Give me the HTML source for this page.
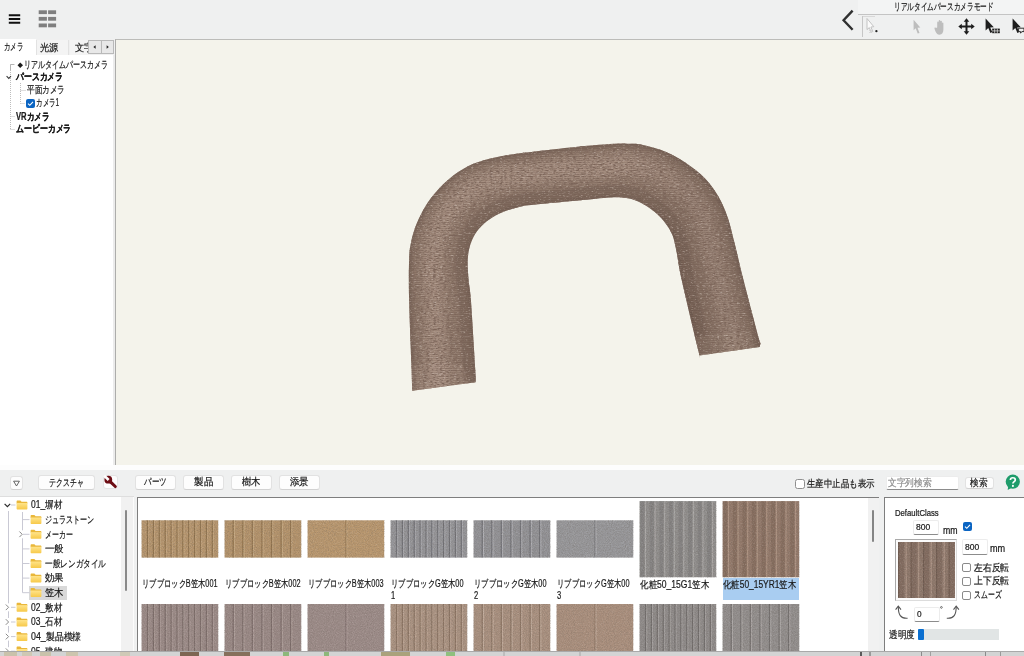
<!DOCTYPE html>
<html lang="ja"><head><meta charset="utf-8"><title>RIKCAD</title>
<style>
html,body{margin:0;padding:0}
body{width:1024px;height:656px;overflow:hidden;background:#eff0f0;font-family:"Liberation Sans",sans-serif;font-size:10px;color:#1b1b1b;position:relative}
div,span,svg{position:absolute;box-sizing:border-box}
.t{white-space:nowrap;transform-origin:0 50%;line-height:12px;height:12px;font-size:10px;-webkit-text-stroke:0.22px currentColor}
.b{font-weight:bold}
.btn{background:#fdfdfd;border:1px solid #e2e2e2;border-bottom-color:#d2d2d2;border-radius:3px}
.inp{background:#fff;border:1px solid #ececec;border-bottom:1px solid #8c8c8c;border-radius:2px}
.cb{width:9px;height:9px;border:1px solid #7a7a7a;border-radius:2px;background:#fff}
.cbx{width:9px;height:9px;border-radius:2px;background:#0a64c2}
</style></head><body>
<!-- window frames -->
<div style="left:0px;top:39px;width:113px;height:426px;background:#fff"></div>
<div style="left:113px;top:39px;width:2px;height:426px;background:#ececec"></div>
<div style="left:0px;top:465px;width:1024px;height:5px;background:#fdfdfd"></div>
<!-- 3D viewport -->
<div style="left:115px;top:39px;width:909px;height:426px;background:#f4f3eb;border-left:1px solid #adadab;border-top:1px solid #bcbcb9"></div>
<svg style="left:0;top:0" width="1024" height="656" viewBox="0 0 1024 656">
<defs>
<clipPath id="oc"><path d="M412.2 390.7C412.1 386.2 411.9 379.1 411.4 364.0C410.9 348.9 409.5 317.3 409.1 300.0C408.7 282.7 408.8 269.6 409.1 260.0C409.4 250.4 409.8 248.4 411.0 242.4C412.2 236.4 414.1 230.2 416.5 224.1C418.9 218.0 422.2 211.4 425.6 205.9C429.0 200.4 432.0 196.2 436.6 191.2C441.2 186.2 446.9 180.3 453.0 175.7C459.1 171.1 466.2 166.9 473.2 163.8C480.2 160.8 487.3 159.2 495.1 157.4C502.9 155.6 514.0 154.1 520.0 153.2C526.0 152.3 522.9 152.8 531.3 151.9C539.7 151.0 556.5 148.9 570.3 147.5C584.1 146.1 604.1 144.4 614.0 143.8C623.9 143.1 624.9 143.6 629.7 143.8C634.5 143.9 636.9 143.6 642.9 144.9C648.9 146.2 658.5 148.6 665.7 151.7C672.9 154.8 679.8 158.8 686.3 163.2C692.8 167.6 699.3 172.5 704.6 178.0C709.9 183.5 714.5 189.8 718.3 196.3C722.1 202.8 724.8 209.3 727.5 216.9C730.2 224.5 731.6 231.5 734.3 242.0C737.0 252.5 739.4 263.9 743.5 280.0C747.6 296.1 756.1 328.4 758.9 338.8C761.7 349.2 760.4 340.7 760.5 342.1C760.6 343.5 759.8 346.3 759.7 347.1L699.4 355.5C699.2 354.8 701.5 363.9 698.5 351.3C695.5 338.7 685.5 297.1 681.7 280.0C678.0 262.9 677.7 256.8 676.0 248.9C674.3 241.1 674.0 238.1 671.5 232.9C669.0 227.8 665.2 222.4 661.2 218.0C657.2 213.6 652.0 209.7 647.4 206.6C642.8 203.5 638.0 201.2 633.7 199.7C629.5 198.2 626.0 197.9 621.9 197.5C617.8 197.1 616.7 197.0 609.4 197.5C602.1 198.0 591.1 199.3 578.1 200.6C565.1 201.8 540.9 204.0 531.2 205.0C521.6 206.0 524.8 205.6 520.0 206.8C515.2 208.0 507.8 210.0 502.4 212.3C497.0 214.6 492.1 217.3 487.8 220.5C483.5 223.7 479.7 227.5 476.8 231.5C473.9 235.5 471.9 239.6 470.4 244.3C468.9 249.1 468.0 254.1 467.7 260.0C467.4 265.9 468.1 273.3 468.6 280.0C469.1 286.7 469.8 285.0 470.9 300.0C472.0 315.0 474.5 356.3 475.3 370.0C476.1 383.7 475.5 380.2 475.5 382.3Z"/></clipPath>
<filter id="bl4" x="-20%" y="-20%" width="140%" height="140%"><feGaussianBlur stdDeviation="4"/></filter>
<filter id="bl1" x="-20%" y="-20%" width="140%" height="140%"><feGaussianBlur stdDeviation="1.1"/></filter>
<filter id="bl2" x="-20%" y="-20%" width="140%" height="140%"><feGaussianBlur stdDeviation="2"/></filter>
<filter id="grain" x="0" y="0" width="100%" height="100%"><feTurbulence type="fractalNoise" baseFrequency="0.3 0.85" numOctaves="2" seed="3"/><feColorMatrix type="matrix" values="0 0 0 0 0.2  0 0 0 0 0.13  0 0 0 0 0.1  2.2 2.2 0 0 -2.0"/></filter>
<filter id="grainl" x="0" y="0" width="100%" height="100%"><feTurbulence type="fractalNoise" baseFrequency="0.35 0.9" numOctaves="2" seed="11"/><feColorMatrix type="matrix" values="0 0 0 0 0.70  0 0 0 0 0.61  0 0 0 0 0.55  1.0 1.0 0 0 -1.08"/></filter>
<pattern id="rows" width="4" height="2" patternUnits="userSpaceOnUse"><rect width="4" height="1" fill="#4a382f" opacity="0.13"/></pattern>
<linearGradient id="lr" x1="0" y1="0" x2="1" y2="0"><stop offset="0" stop-color="#3c2c25" stop-opacity="0"/><stop offset="0.62" stop-color="#3c2c25" stop-opacity="0"/><stop offset="0.8" stop-color="#3c2c25" stop-opacity="0.13"/><stop offset="1" stop-color="#3c2c25" stop-opacity="0.1"/></linearGradient>
</defs>
<path d="M412.2 390.7C412.1 386.2 411.9 379.1 411.4 364.0C410.9 348.9 409.5 317.3 409.1 300.0C408.7 282.7 408.8 269.6 409.1 260.0C409.4 250.4 409.8 248.4 411.0 242.4C412.2 236.4 414.1 230.2 416.5 224.1C418.9 218.0 422.2 211.4 425.6 205.9C429.0 200.4 432.0 196.2 436.6 191.2C441.2 186.2 446.9 180.3 453.0 175.7C459.1 171.1 466.2 166.9 473.2 163.8C480.2 160.8 487.3 159.2 495.1 157.4C502.9 155.6 514.0 154.1 520.0 153.2C526.0 152.3 522.9 152.8 531.3 151.9C539.7 151.0 556.5 148.9 570.3 147.5C584.1 146.1 604.1 144.4 614.0 143.8C623.9 143.1 624.9 143.6 629.7 143.8C634.5 143.9 636.9 143.6 642.9 144.9C648.9 146.2 658.5 148.6 665.7 151.7C672.9 154.8 679.8 158.8 686.3 163.2C692.8 167.6 699.3 172.5 704.6 178.0C709.9 183.5 714.5 189.8 718.3 196.3C722.1 202.8 724.8 209.3 727.5 216.9C730.2 224.5 731.6 231.5 734.3 242.0C737.0 252.5 739.4 263.9 743.5 280.0C747.6 296.1 756.1 328.4 758.9 338.8C761.7 349.2 760.4 340.7 760.5 342.1C760.6 343.5 759.8 346.3 759.7 347.1L699.4 355.5C699.2 354.8 701.5 363.9 698.5 351.3C695.5 338.7 685.5 297.1 681.7 280.0C678.0 262.9 677.7 256.8 676.0 248.9C674.3 241.1 674.0 238.1 671.5 232.9C669.0 227.8 665.2 222.4 661.2 218.0C657.2 213.6 652.0 209.7 647.4 206.6C642.8 203.5 638.0 201.2 633.7 199.7C629.5 198.2 626.0 197.9 621.9 197.5C617.8 197.1 616.7 197.0 609.4 197.5C602.1 198.0 591.1 199.3 578.1 200.6C565.1 201.8 540.9 204.0 531.2 205.0C521.6 206.0 524.8 205.6 520.0 206.8C515.2 208.0 507.8 210.0 502.4 212.3C497.0 214.6 492.1 217.3 487.8 220.5C483.5 223.7 479.7 227.5 476.8 231.5C473.9 235.5 471.9 239.6 470.4 244.3C468.9 249.1 468.0 254.1 467.7 260.0C467.4 265.9 468.1 273.3 468.6 280.0C469.1 286.7 469.8 285.0 470.9 300.0C472.0 315.0 474.5 356.3 475.3 370.0C476.1 383.7 475.5 380.2 475.5 382.3Z" fill="#907a6c"/>
<g clip-path="url(#oc)">
<path d="M438 388C437.6 378.3 436.2 346.3 435.5 330.0C434.8 313.7 434.4 302.0 434.0 290.0C433.6 278.0 432.7 266.7 433.0 258.0C433.3 249.3 434.2 244.5 436.0 238.0C437.8 231.5 440.2 224.9 443.5 219.0C446.8 213.1 450.8 207.7 456.0 202.5C461.2 197.3 468.3 191.8 475.0 188.0C481.7 184.2 488.5 181.7 496.0 179.5C503.5 177.3 506.3 176.8 520.0 175.0C533.7 173.2 561.3 170.2 578.0 168.6C594.7 167.0 609.3 165.9 620.0 165.6C630.7 165.3 634.7 165.3 642.0 167.0C649.3 168.7 656.8 171.5 664.0 175.5C671.2 179.5 679.0 184.9 685.0 191.0C691.0 197.1 696.2 204.2 700.0 212.0C703.8 219.8 704.9 226.7 708.0 238.0C711.1 249.3 714.3 262.2 718.6 280.0C722.9 297.8 731.4 334.2 734.0 345.0" fill="none" stroke="#ab9486" stroke-width="22" stroke-linecap="round" filter="url(#bl4)" opacity="0.8"/>
<path d="M699.4 355.5C699.2 354.8 701.5 363.9 698.5 351.3C695.5 338.7 685.5 297.1 681.7 280.0C678.0 262.9 677.7 256.8 676.0 248.9C674.3 241.1 674.0 238.1 671.5 232.9C669.0 227.8 665.2 222.4 661.2 218.0C657.2 213.6 652.0 209.7 647.4 206.6C642.8 203.5 638.0 201.2 633.7 199.7C629.5 198.2 626.0 197.9 621.9 197.5C617.8 197.1 616.7 197.0 609.4 197.5C602.1 198.0 591.1 199.3 578.1 200.6C565.1 201.8 540.9 204.0 531.2 205.0C521.6 206.0 524.8 205.6 520.0 206.8C515.2 208.0 507.8 210.0 502.4 212.3C497.0 214.6 492.1 217.3 487.8 220.5C483.5 223.7 479.7 227.5 476.8 231.5C473.9 235.5 471.9 239.6 470.4 244.3C468.9 249.1 468.0 254.1 467.7 260.0C467.4 265.9 468.1 273.3 468.6 280.0C469.1 286.7 469.8 285.0 470.9 300.0C472.0 315.0 474.5 356.3 475.3 370.0C476.1 383.7 475.5 380.2 475.5 382.3" fill="none" stroke="#54423a" stroke-width="25" filter="url(#bl1)" opacity="0.27"/>
<path d="M699.4 355.5C699.2 354.8 701.5 363.9 698.5 351.3C695.5 338.7 685.5 297.1 681.7 280.0C678.0 262.9 677.7 256.8 676.0 248.9C674.3 241.1 674.0 238.1 671.5 232.9C669.0 227.8 665.2 222.4 661.2 218.0C657.2 213.6 652.0 209.7 647.4 206.6C642.8 203.5 638.0 201.2 633.7 199.7C629.5 198.2 626.0 197.9 621.9 197.5C617.8 197.1 616.7 197.0 609.4 197.5C602.1 198.0 591.1 199.3 578.1 200.6C565.1 201.8 540.9 204.0 531.2 205.0C521.6 206.0 524.8 205.6 520.0 206.8C515.2 208.0 507.8 210.0 502.4 212.3C497.0 214.6 492.1 217.3 487.8 220.5C483.5 223.7 479.7 227.5 476.8 231.5C473.9 235.5 471.9 239.6 470.4 244.3C468.9 249.1 468.0 254.1 467.7 260.0C467.4 265.9 468.1 273.3 468.6 280.0C469.1 286.7 469.8 285.0 470.9 300.0C472.0 315.0 474.5 356.3 475.3 370.0C476.1 383.7 475.5 380.2 475.5 382.3" fill="none" stroke="#54423a" stroke-width="5" filter="url(#bl2)" opacity="0.3"/>
<path d="M412.2 390.7C412.1 386.2 411.9 379.1 411.4 364.0C410.9 348.9 409.5 317.3 409.1 300.0C408.7 282.7 408.8 269.6 409.1 260.0C409.4 250.4 409.8 248.4 411.0 242.4C412.2 236.4 414.1 230.2 416.5 224.1C418.9 218.0 422.2 211.4 425.6 205.9C429.0 200.4 432.0 196.2 436.6 191.2C441.2 186.2 446.9 180.3 453.0 175.7C459.1 171.1 466.2 166.9 473.2 163.8C480.2 160.8 487.3 159.2 495.1 157.4C502.9 155.6 514.0 154.1 520.0 153.2C526.0 152.3 522.9 152.8 531.3 151.9C539.7 151.0 556.5 148.9 570.3 147.5C584.1 146.1 604.1 144.4 614.0 143.8C623.9 143.1 624.9 143.6 629.7 143.8C634.5 143.9 636.9 143.6 642.9 144.9C648.9 146.2 658.5 148.6 665.7 151.7C672.9 154.8 679.8 158.8 686.3 163.2C692.8 167.6 699.3 172.5 704.6 178.0C709.9 183.5 714.5 189.8 718.3 196.3C722.1 202.8 724.8 209.3 727.5 216.9C730.2 224.5 731.6 231.5 734.3 242.0C737.0 252.5 739.4 263.9 743.5 280.0C747.6 296.1 756.1 328.4 758.9 338.8C761.7 349.2 760.4 340.7 760.5 342.1C760.6 343.5 759.8 346.3 759.7 347.1" fill="none" stroke="#54423a" stroke-width="5" filter="url(#bl2)" opacity="0.5"/>
<path d="M410 365L462.5 364L476 376L476 384L411 392Z" fill="#b9a395" opacity="0.22"/>
<path d="M462.5 364L476 376L476 384L469 384Z" fill="#4a382f" opacity="0.22"/>
<path d="M695 337.5L751.3 330.4L761 342L760 348L699 357Z" fill="#b9a395" opacity="0.25"/>
<path d="M751.3 330.4L761 342L760 348L754 348.5Z" fill="#4a382f" opacity="0.2"/>
<rect x="405" y="140" width="360" height="255" fill="url(#lr)"/>
<rect x="405" y="140" width="360" height="255" fill="url(#rows)"/>
<rect x="405" y="140" width="360" height="255" filter="url(#grain)"/>
<rect x="405" y="140" width="360" height="255" filter="url(#grainl)"/>
</g>
</svg>
<!-- top toolbar -->
<svg style="left:8px;top:13px" width="14" height="12" viewBox="0 0 14 12"><path d="M0.8 2.3H12.2M0.8 6H12.2M0.8 9.8H12.2" stroke="#111" stroke-width="1.9"/></svg>
<svg style="left:38px;top:10px" width="19" height="18" viewBox="0 0 19 18"><g fill="#7f7f7f"><rect x="0.7" y="0.3" width="8.2" height="3.8"/><rect x="10.1" y="0.3" width="8" height="3.8"/><rect x="0.7" y="6.9" width="8.2" height="3.8"/><rect x="10.1" y="6.9" width="8" height="3.8"/><rect x="0.7" y="13.5" width="8.2" height="3.8"/><rect x="10.1" y="13.5" width="8" height="3.8"/></g></svg>
<svg style="left:840px;top:8px" width="16" height="24" viewBox="0 0 16 24"><path d="M12.6 2.6L3.6 12.2L12.6 21.8" fill="none" stroke="#303030" stroke-width="2.4"/></svg>
<div style="left:858px;top:0px;width:166px;height:14.5px;background:#f3f4f4;border-bottom:1px solid #c4c4c4"></div>
<span class="t" style="left:893.5px;top:1.0px;transform:scaleX(0.663)">リアルタイムパースカメラモード</span>
<div style="left:862px;top:16px;width:1px;height:21px;background:#c6c6c6"></div>
<div style="left:863px;top:16px;width:12px;height:1px;background:#d8d8d8"></div>
<svg style="left:865px;top:17px" width="14" height="19" viewBox="0 0 14 19"><path d="M2 1.5L2 12.6L4.3 10.6L6.2 15.2L7.8 14.5L5.9 10L8.8 9.7Z" fill="#fbfbfb" stroke="#bdbdbd" stroke-width="0.9"/><path d="M4 13.5h3M4 15.5h3" stroke="#d0d0d0" stroke-width="0.8"/><circle cx="11.4" cy="14.2" r="1.15" fill="#222"/></svg>
<svg style="left:912px;top:19px" width="10" height="17" viewBox="0 0 10 17"><path d="M1.6 0.8L1.6 11.2L3.7 9.3L5.7 14.6L7.5 13.9L5.5 8.7L8.3 8.5Z" fill="#bdbdbd"/></svg>
<svg style="left:934px;top:19px" width="14" height="17" viewBox="0 0 14 17"><path d="M3.2 8.6V3.4c0-1.1 1.5-1.1 1.5 0V7V1.9c0-1.2 1.6-1.2 1.6 0V7V2.5c0-1.1 1.6-1.1 1.6 0V7.4V4.3c0-1.1 1.5-1.1 1.5 0V10.5c0 3-1.3 5.2-3.9 5.2c-2.3 0-3-1.4-4-3.2L0.6 9.9c-.5-1 .6-1.7 1.3-1Z" fill="#bdbdbd"/></svg>
<svg style="left:958px;top:18px" width="17" height="17" viewBox="0 0 17 17"><path d="M8.5 0.3L11.3 3.8H9.5V7.5H13.2V5.7L16.7 8.5L13.2 11.3V9.5H9.5V13.2H11.3L8.5 16.7L5.7 13.2H7.5V9.5H3.8V11.3L0.3 8.5L3.8 5.7V7.5H7.5V3.8H5.7Z" fill="#1d1d1d"/></svg>
<svg style="left:984px;top:18px" width="17" height="17" viewBox="0 0 17 17"><path d="M1.6 0.6L1.6 12.4L4.3 10.1L6.4 14.9L8.3 14L6.2 9.4L9.8 9.2Z" fill="#1d1d1d"/><rect x="8.2" y="10.6" width="7.6" height="4.6" fill="#1d1d1d"/><path d="M8.2 12.9h7.6M10.7 10.6v4.6M13.3 10.6v4.6" stroke="#f0f0f0" stroke-width="0.7"/></svg>
<svg style="left:1011px;top:18px" width="13" height="17" viewBox="0 0 13 17"><path d="M1.6 0.6L1.6 12.4L4.3 10.1L6.4 14.9L8.3 14L6.2 9.4L9.8 9.2Z" fill="#1d1d1d"/><path d="M7.6 10.2h5.4v3.4h-2.2l-1.2 1.6v-1.6h-2Z" fill="#f0f0f0" stroke="#1d1d1d" stroke-width="0.9"/></svg>
<!-- camera / light tabs + camera tree -->
<div style="left:36px;top:39px;width:79px;height:16px;background:#f0f0f0"></div>
<div style="left:0px;top:39px;width:36px;height:16px;background:#fff"></div>
<div style="left:36px;top:40px;width:33px;height:15px;background:#f4f4f4;border-left:1px solid #e2e2e2;border-right:1px solid #e2e2e2"></div>
<div style="left:70px;top:40px;width:20px;height:15px;background:#f4f4f4"></div>
<span class="t" style="left:4.4px;top:40.9px;transform:scaleX(0.647)">カメラ</span>
<span class="t" style="left:39.8px;top:42.0px;transform:scaleX(0.92)">光源</span>
<div style="left:74.5px;top:42px;width:13.6px;height:12px;overflow:hidden"><span class="t" style="left:0.0px;top:0.0px;transform:scaleX(0.92)">文字</span></div>
<div style="left:88.4px;top:40.4px;width:13.2px;height:13.2px;background:#e8e8e8;border:1px solid #b9b9b9"></div>
<div style="left:101.4px;top:40.4px;width:13px;height:13.2px;background:#e8e8e8;border:1px solid #b9b9b9"></div>
<svg style="left:88px;top:40px" width="26" height="14" viewBox="0 0 26 14"><path d="M7.6 5.2L5.4 7L7.6 8.8Z" fill="#222"/><path d="M18.6 5.2L20.8 7L18.6 8.8Z" fill="#222"/></svg>
<svg style="left:0;top:56px" width="60" height="80" viewBox="0 0 60 80"><g fill="none" stroke="#bdbdbd" stroke-width="1" stroke-dasharray="1 1"><path d="M10.5 12V73.5M10.5 8.5H15M10.5 60.5H15M10.5 73.5H15M20.5 27V47.5M20.5 34.5H26M20.5 47.5H25"/></g><path d="M10.5 8.5V14" stroke="#b4b4b4"/><path d="M10.5 8.5H14" stroke="#b4b4b4"/><path d="M6.6 20.2L8.8 22.4L11 20.2" fill="none" stroke="#3a3a3a" stroke-width="1.1"/></svg>
<svg style="left:17px;top:61.6px" width="7" height="7" viewBox="0 0 7 7"><path d="M3.2 0.6L6 3.3L3.2 6L0.5 3.3Z" fill="#1b1b1b"/></svg><span class="t" style="left:23.6px;top:58.6px;transform:scaleX(0.702)">リアルタイムパースカメラ</span>
<span class="t b" style="left:16.0px;top:71.4px;transform:scaleX(0.787)">パースカメラ</span>
<span class="t" style="left:27.4px;top:84.4px;transform:scaleX(0.762)">平面カメラ</span>
<div class="cbx" style="left:26px;top:99px"></div><svg style="left:26px;top:99px" width="9" height="9" viewBox="0 0 9 9"><path d="M2 4.6L3.8 6.3L7 2.8" fill="none" stroke="#fff" stroke-width="1.1"/></svg>
<span class="t" style="left:36.3px;top:97.3px;transform:scaleX(0.65)">カメラ1</span>
<span class="t b" style="left:16.0px;top:110.6px;transform:scaleX(0.763)">VRカメラ</span>
<span class="t b" style="left:16.0px;top:123.3px;transform:scaleX(0.79)">ムービーカメラ</span>
<!-- bottom toolbar -->
<div class="btn" style="left:10px;top:476px;width:13px;height:14px"></div><svg style="left:10px;top:476px" width="13" height="14" viewBox="0 0 13 14"><path d="M3.6 5.2H9.4L6.5 10Z" fill="none" stroke="#555" stroke-width="0.9"/></svg>
<div class="btn" style="left:38px;top:475px;width:57px;height:15px"></div><span class="t" style="left:49.0px;top:476.6px;transform:scaleX(0.688)">テクスチャ</span>
<div class="btn" style="left:102.5px;top:475px;width:15px;height:14px;border-color:#e4e4e4"></div><svg style="left:103px;top:475px" width="15" height="14" viewBox="0 0 15 14"><path d="M7.2 6.6L12.3 11.5" stroke="#6d0d14" stroke-width="3.1" stroke-linecap="round"/><circle cx="5.3" cy="4.7" r="3.9" fill="#6d0d14"/><path d="M5.6 5L1.2 0.6" stroke="#fdfdfd" stroke-width="2.7"/></svg>
<div class="btn" style="left:134.5px;top:474.5px;width:41px;height:15.5px"></div><span class="t" style="left:143.8px;top:476.4px;transform:scaleX(0.75)">パーツ</span>
<div class="btn" style="left:182.5px;top:474.5px;width:41px;height:15.5px"></div><span class="t" style="left:193.5px;top:476.4px;transform:scaleX(0.95)">製品</span>
<div class="btn" style="left:230.5px;top:474.5px;width:41px;height:15.5px"></div><span class="t" style="left:241.6px;top:476.4px;transform:scaleX(0.94)">樹木</span>
<div class="btn" style="left:278.5px;top:474.5px;width:41px;height:15.5px"></div><span class="t" style="left:289.6px;top:476.4px;transform:scaleX(0.94)">添景</span>
<div class="cb" style="left:795.3px;top:479.2px;width:9.5px;height:9.5px;border-color:#8f8f8f;border-radius:2.5px"></div><span class="t" style="left:806.8px;top:478.0px;transform:scaleX(0.847)">生産中止品も表示</span>
<div class="inp" style="left:886px;top:476px;width:72.5px;height:14px"></div><span class="t" style="left:887.6px;top:476.6px;transform:scaleX(0.87);color:#8d8d8d">文字列検索</span>
<div class="btn" style="left:965px;top:476.5px;width:28.5px;height:12px"></div><span class="t" style="left:970.3px;top:476.6px;transform:scaleX(0.86)">検索</span>
<svg style="left:1004px;top:473px" width="18" height="19" viewBox="0 0 18 19"><path d="M4.2 13.3L3.7 17L7.6 14.8Z" fill="#1f9c6b"/><circle cx="8.8" cy="8.7" r="7.1" fill="#1f9c6b"/><path d="M6.4 6.9C6.4 4 11.3 4 11.3 6.9C11.3 8.6 8.9 8.7 8.9 10.5" fill="none" stroke="#fff" stroke-width="1.7"/><circle cx="8.9" cy="12.9" r="1.05" fill="#fff"/></svg>
<!-- material folder tree -->
<div style="left:0px;top:496px;width:134px;height:155px;background:#fff;border-top:1px solid #dedede"></div>
<div style="left:120.5px;top:497px;width:12px;height:154px;background:#f1f1f1"></div>
<div style="left:132.5px;top:497px;width:1.6px;height:154px;background:#fcfcfc"></div>
<div style="left:125px;top:510px;width:2px;height:81px;background:#8a8a8a;border-radius:1px"></div>
<div style="left:28.5px;top:585.5px;width:38.5px;height:14px;background:#d9d9d9"></div>
<svg style="left:0;top:497px" width="120" height="154" viewBox="0 497 120 154"><defs><linearGradient id="fg" x1="0" y1="0" x2="0" y2="1"><stop offset="0" stop-color="#ffe48a"/><stop offset="1" stop-color="#f7c94a"/></linearGradient></defs><g fill="none" stroke="#c9c9d4" stroke-width="1"><path d="M8.5 511V656M22.5 512V592.7"/><path d="M11 505H15.5"/><path d="M22.5 519.6H29.5"/><path d="M22.5 534.3H29.5"/><path d="M22.5 548.9H29.5"/><path d="M22.5 563.5H29.5"/><path d="M22.5 578.1H29.5"/><path d="M22.5 592.7H29.5"/><path d="M11 607.3H15.5"/><path d="M11 622.0H15.5"/><path d="M11 636.6H15.5"/><path d="M11 651.2H15.5"/></g><g transform="translate(16.0 499.8)"><path d="M0.6 1.6C0.6 1 1 0.6 1.6 0.6H4.4L5.6 1.9H10.4C11 1.9 11.4 2.3 11.4 2.9V3.6H0.6Z" fill="#e9b73a"/><path d="M0.6 3.1H11.4V8.6C11.4 9.2 11 9.6 10.4 9.6H1.6C1 9.6 0.6 9.2 0.6 8.6Z" fill="url(#fg)"/></g><path d="M4.6000000000000005 503.8L7.4 506.6L10.2 503.8" fill="none" stroke="#2b2b2b" stroke-width="1.2"/><g transform="translate(30.0 514.4)"><path d="M0.6 1.6C0.6 1 1 0.6 1.6 0.6H4.4L5.6 1.9H10.4C11 1.9 11.4 2.3 11.4 2.9V3.6H0.6Z" fill="#e9b73a"/><path d="M0.6 3.1H11.4V8.6C11.4 9.2 11 9.6 10.4 9.6H1.6C1 9.6 0.6 9.2 0.6 8.6Z" fill="url(#fg)"/></g><g transform="translate(30.0 529.0999999999999)"><path d="M0.6 1.6C0.6 1 1 0.6 1.6 0.6H4.4L5.6 1.9H10.4C11 1.9 11.4 2.3 11.4 2.9V3.6H0.6Z" fill="#e9b73a"/><path d="M0.6 3.1H11.4V8.6C11.4 9.2 11 9.6 10.4 9.6H1.6C1 9.6 0.6 9.2 0.6 8.6Z" fill="url(#fg)"/></g><rect x="18.0" y="530.3" width="5" height="8" fill="#fff"/><path d="M19.4 531.5L22.2 534.3L19.4 537.0999999999999" fill="none" stroke="#8a8a8a" stroke-width="1"/><g transform="translate(30.0 543.6999999999999)"><path d="M0.6 1.6C0.6 1 1 0.6 1.6 0.6H4.4L5.6 1.9H10.4C11 1.9 11.4 2.3 11.4 2.9V3.6H0.6Z" fill="#e9b73a"/><path d="M0.6 3.1H11.4V8.6C11.4 9.2 11 9.6 10.4 9.6H1.6C1 9.6 0.6 9.2 0.6 8.6Z" fill="url(#fg)"/></g><g transform="translate(30.0 558.3)"><path d="M0.6 1.6C0.6 1 1 0.6 1.6 0.6H4.4L5.6 1.9H10.4C11 1.9 11.4 2.3 11.4 2.9V3.6H0.6Z" fill="#e9b73a"/><path d="M0.6 3.1H11.4V8.6C11.4 9.2 11 9.6 10.4 9.6H1.6C1 9.6 0.6 9.2 0.6 8.6Z" fill="url(#fg)"/></g><g transform="translate(30.0 572.9)"><path d="M0.6 1.6C0.6 1 1 0.6 1.6 0.6H4.4L5.6 1.9H10.4C11 1.9 11.4 2.3 11.4 2.9V3.6H0.6Z" fill="#e9b73a"/><path d="M0.6 3.1H11.4V8.6C11.4 9.2 11 9.6 10.4 9.6H1.6C1 9.6 0.6 9.2 0.6 8.6Z" fill="url(#fg)"/></g><g transform="translate(30.0 587.5)"><path d="M0.6 1.6C0.6 1 1 0.6 1.6 0.6H4.4L5.6 1.9H10.4C11 1.9 11.4 2.3 11.4 2.9V3.6H0.6Z" fill="#e9b73a"/><path d="M0.6 3.1H11.4V8.6C11.4 9.2 11 9.6 10.4 9.6H1.6C1 9.6 0.6 9.2 0.6 8.6Z" fill="url(#fg)"/></g><g transform="translate(16.0 602.0999999999999)"><path d="M0.6 1.6C0.6 1 1 0.6 1.6 0.6H4.4L5.6 1.9H10.4C11 1.9 11.4 2.3 11.4 2.9V3.6H0.6Z" fill="#e9b73a"/><path d="M0.6 3.1H11.4V8.6C11.4 9.2 11 9.6 10.4 9.6H1.6C1 9.6 0.6 9.2 0.6 8.6Z" fill="url(#fg)"/></g><rect x="4.4" y="603.3" width="5" height="8" fill="#fff"/><path d="M5.800000000000001 604.5L8.6 607.3L5.800000000000001 610.0999999999999" fill="none" stroke="#8a8a8a" stroke-width="1"/><g transform="translate(16.0 616.8)"><path d="M0.6 1.6C0.6 1 1 0.6 1.6 0.6H4.4L5.6 1.9H10.4C11 1.9 11.4 2.3 11.4 2.9V3.6H0.6Z" fill="#e9b73a"/><path d="M0.6 3.1H11.4V8.6C11.4 9.2 11 9.6 10.4 9.6H1.6C1 9.6 0.6 9.2 0.6 8.6Z" fill="url(#fg)"/></g><rect x="4.4" y="618.0" width="5" height="8" fill="#fff"/><path d="M5.800000000000001 619.2L8.6 622.0L5.800000000000001 624.8" fill="none" stroke="#8a8a8a" stroke-width="1"/><g transform="translate(16.0 631.4)"><path d="M0.6 1.6C0.6 1 1 0.6 1.6 0.6H4.4L5.6 1.9H10.4C11 1.9 11.4 2.3 11.4 2.9V3.6H0.6Z" fill="#e9b73a"/><path d="M0.6 3.1H11.4V8.6C11.4 9.2 11 9.6 10.4 9.6H1.6C1 9.6 0.6 9.2 0.6 8.6Z" fill="url(#fg)"/></g><rect x="4.4" y="632.6" width="5" height="8" fill="#fff"/><path d="M5.800000000000001 633.8000000000001L8.6 636.6L5.800000000000001 639.4" fill="none" stroke="#8a8a8a" stroke-width="1"/><g transform="translate(16.0 646.0)"><path d="M0.6 1.6C0.6 1 1 0.6 1.6 0.6H4.4L5.6 1.9H10.4C11 1.9 11.4 2.3 11.4 2.9V3.6H0.6Z" fill="#e9b73a"/><path d="M0.6 3.1H11.4V8.6C11.4 9.2 11 9.6 10.4 9.6H1.6C1 9.6 0.6 9.2 0.6 8.6Z" fill="url(#fg)"/></g><rect x="4.4" y="647.2" width="5" height="8" fill="#fff"/><path d="M5.800000000000001 648.4000000000001L8.6 651.2L5.800000000000001 654.0" fill="none" stroke="#8a8a8a" stroke-width="1"/></svg>
<div style="left:0;top:497px;width:120px;height:154px;overflow:hidden"><span class="t" style="left:31.2px;top:2.3px;transform:scaleX(0.845)">01_塀材</span>
<span class="t" style="left:45.2px;top:16.9px;transform:scaleX(0.707)">ジュラストーン</span>
<span class="t" style="left:45.2px;top:31.6px;transform:scaleX(0.698)">メーカー</span>
<span class="t" style="left:45.2px;top:46.2px;transform:scaleX(0.94)">一般</span>
<span class="t" style="left:45.2px;top:60.8px;transform:scaleX(0.764)">一般レンガタイル</span>
<span class="t" style="left:45.2px;top:75.4px;transform:scaleX(0.94)">効果</span>
<span class="t" style="left:45.2px;top:90.0px;transform:scaleX(0.94)">笠木</span>
<span class="t" style="left:31.2px;top:104.6px;transform:scaleX(0.845)">02_敷材</span>
<span class="t" style="left:31.2px;top:119.3px;transform:scaleX(0.845)">03_石材</span>
<span class="t" style="left:31.2px;top:133.9px;transform:scaleX(0.886)">04_製品模様</span>
<span class="t" style="left:31.2px;top:148.5px;transform:scaleX(0.845)">05_建物</span>
</div>
<!-- texture thumbnails -->
<div style="left:137px;top:497px;width:742px;height:154px;background:#fff;border-left:1px solid #7e7e7e;border-top:1px solid #7e7e7e"></div>
<div style="left:867.5px;top:498px;width:11.5px;height:153px;background:#f1f1f1"></div>
<div style="left:872px;top:510px;width:2px;height:32px;background:#858585;border-radius:1px"></div>
<div style="left:722.7px;top:578.3px;width:76.6px;height:21.6px;background:#a9cdf1"></div>
<svg style="left:138px;top:498px" width="729" height="153" viewBox="138 498 729 153"><defs><filter id="tn" x="0" y="0" width="100%" height="100%"><feTurbulence type="fractalNoise" baseFrequency="0.95" numOctaves="2" seed="7"/><feColorMatrix type="matrix" values="0 0 0 0 0.12  0 0 0 0 0.1  0 0 0 0 0.08  1.5 1.5 0 0 -1.22"/></filter><filter id="tl" x="0" y="0" width="100%" height="100%"><feTurbulence type="fractalNoise" baseFrequency="0.9" numOctaves="2" seed="21"/><feColorMatrix type="matrix" values="0 0 0 0 1  0 0 0 0 0.97  0 0 0 0 0.93  1.4 1.4 0 0 -1.3"/></filter></defs><rect x="141.6" y="520.3" width="76.6" height="37.3" fill="#b6956d"/><path d="M147.5 520.3V557.5999999999999" stroke="#7c5f3a" stroke-width="1.2" opacity="0.62"/><path d="M148.7 520.3V557.5999999999999" stroke="#d8bd96" stroke-width="0.8" opacity="0.45"/><path d="M153.4 520.3V557.5999999999999" stroke="#7c5f3a" stroke-width="1.2" opacity="0.62"/><path d="M154.6 520.3V557.5999999999999" stroke="#d8bd96" stroke-width="0.8" opacity="0.45"/><path d="M159.3 520.3V557.5999999999999" stroke="#7c5f3a" stroke-width="1.2" opacity="0.62"/><path d="M160.5 520.3V557.5999999999999" stroke="#d8bd96" stroke-width="0.8" opacity="0.45"/><path d="M165.2 520.3V557.5999999999999" stroke="#7c5f3a" stroke-width="1.2" opacity="0.62"/><path d="M166.4 520.3V557.5999999999999" stroke="#d8bd96" stroke-width="0.8" opacity="0.45"/><path d="M171.1 520.3V557.5999999999999" stroke="#7c5f3a" stroke-width="1.2" opacity="0.62"/><path d="M172.3 520.3V557.5999999999999" stroke="#d8bd96" stroke-width="0.8" opacity="0.45"/><path d="M177.0 520.3V557.5999999999999" stroke="#7c5f3a" stroke-width="1.2" opacity="0.62"/><path d="M178.2 520.3V557.5999999999999" stroke="#d8bd96" stroke-width="0.8" opacity="0.45"/><path d="M182.8 520.3V557.5999999999999" stroke="#7c5f3a" stroke-width="1.2" opacity="0.62"/><path d="M184.0 520.3V557.5999999999999" stroke="#d8bd96" stroke-width="0.8" opacity="0.45"/><path d="M188.7 520.3V557.5999999999999" stroke="#7c5f3a" stroke-width="1.2" opacity="0.62"/><path d="M189.9 520.3V557.5999999999999" stroke="#d8bd96" stroke-width="0.8" opacity="0.45"/><path d="M194.6 520.3V557.5999999999999" stroke="#7c5f3a" stroke-width="1.2" opacity="0.62"/><path d="M195.8 520.3V557.5999999999999" stroke="#d8bd96" stroke-width="0.8" opacity="0.45"/><path d="M200.5 520.3V557.5999999999999" stroke="#7c5f3a" stroke-width="1.2" opacity="0.62"/><path d="M201.7 520.3V557.5999999999999" stroke="#d8bd96" stroke-width="0.8" opacity="0.45"/><path d="M206.4 520.3V557.5999999999999" stroke="#7c5f3a" stroke-width="1.2" opacity="0.62"/><path d="M207.6 520.3V557.5999999999999" stroke="#d8bd96" stroke-width="0.8" opacity="0.45"/><path d="M212.3 520.3V557.5999999999999" stroke="#7c5f3a" stroke-width="1.2" opacity="0.62"/><path d="M213.5 520.3V557.5999999999999" stroke="#d8bd96" stroke-width="0.8" opacity="0.45"/><rect x="141.6" y="520.3" width="76.6" height="37.3" filter="url(#tn)" opacity="0.27"/><rect x="141.6" y="520.3" width="76.6" height="37.3" filter="url(#tl)" opacity="0.16"/><rect x="224.6" y="520.3" width="76.6" height="37.3" fill="#b4936b"/><path d="M233.2 520.3V557.5999999999999" stroke="#7c5f3a" stroke-width="1.2" opacity="0.6"/><path d="M234.5 520.3V557.5999999999999" stroke="#d8bd96" stroke-width="0.9" opacity="0.55"/><path d="M242.8 520.3V557.5999999999999" stroke="#7c5f3a" stroke-width="1.2" opacity="0.6"/><path d="M244.1 520.3V557.5999999999999" stroke="#d8bd96" stroke-width="0.9" opacity="0.55"/><path d="M252.3 520.3V557.5999999999999" stroke="#7c5f3a" stroke-width="1.2" opacity="0.6"/><path d="M253.6 520.3V557.5999999999999" stroke="#d8bd96" stroke-width="0.9" opacity="0.55"/><path d="M261.9 520.3V557.5999999999999" stroke="#7c5f3a" stroke-width="1.2" opacity="0.6"/><path d="M263.2 520.3V557.5999999999999" stroke="#d8bd96" stroke-width="0.9" opacity="0.55"/><path d="M271.5 520.3V557.5999999999999" stroke="#7c5f3a" stroke-width="1.2" opacity="0.6"/><path d="M272.8 520.3V557.5999999999999" stroke="#d8bd96" stroke-width="0.9" opacity="0.55"/><path d="M281.1 520.3V557.5999999999999" stroke="#7c5f3a" stroke-width="1.2" opacity="0.6"/><path d="M282.4 520.3V557.5999999999999" stroke="#d8bd96" stroke-width="0.9" opacity="0.55"/><path d="M290.6 520.3V557.5999999999999" stroke="#7c5f3a" stroke-width="1.2" opacity="0.6"/><path d="M291.9 520.3V557.5999999999999" stroke="#d8bd96" stroke-width="0.9" opacity="0.55"/><rect x="224.6" y="520.3" width="76.6" height="37.3" filter="url(#tn)" opacity="0.27"/><rect x="224.6" y="520.3" width="76.6" height="37.3" filter="url(#tl)" opacity="0.16"/><rect x="307.6" y="520.3" width="76.6" height="37.3" fill="#b9976e"/><path d="M345.9 520.3V557.5999999999999" stroke="#7c5f3a" stroke-width="1.1" opacity="0.55"/><path d="M347.0 520.3V557.5999999999999" stroke="#dcc29c" stroke-width="0.8" opacity="0.5"/><rect x="307.6" y="520.3" width="76.6" height="37.3" filter="url(#tn)" opacity="0.27"/><rect x="307.6" y="520.3" width="76.6" height="37.3" filter="url(#tl)" opacity="0.16"/><rect x="390.6" y="520.3" width="76.6" height="37.3" fill="#949498"/><path d="M396.5 520.3V557.5999999999999" stroke="#5c5c62" stroke-width="1.2" opacity="0.62"/><path d="M397.7 520.3V557.5999999999999" stroke="#cfcfd5" stroke-width="0.8" opacity="0.45"/><path d="M402.4 520.3V557.5999999999999" stroke="#5c5c62" stroke-width="1.2" opacity="0.62"/><path d="M403.6 520.3V557.5999999999999" stroke="#cfcfd5" stroke-width="0.8" opacity="0.45"/><path d="M408.3 520.3V557.5999999999999" stroke="#5c5c62" stroke-width="1.2" opacity="0.62"/><path d="M409.5 520.3V557.5999999999999" stroke="#cfcfd5" stroke-width="0.8" opacity="0.45"/><path d="M414.2 520.3V557.5999999999999" stroke="#5c5c62" stroke-width="1.2" opacity="0.62"/><path d="M415.4 520.3V557.5999999999999" stroke="#cfcfd5" stroke-width="0.8" opacity="0.45"/><path d="M420.1 520.3V557.5999999999999" stroke="#5c5c62" stroke-width="1.2" opacity="0.62"/><path d="M421.3 520.3V557.5999999999999" stroke="#cfcfd5" stroke-width="0.8" opacity="0.45"/><path d="M426.0 520.3V557.5999999999999" stroke="#5c5c62" stroke-width="1.2" opacity="0.62"/><path d="M427.2 520.3V557.5999999999999" stroke="#cfcfd5" stroke-width="0.8" opacity="0.45"/><path d="M431.8 520.3V557.5999999999999" stroke="#5c5c62" stroke-width="1.2" opacity="0.62"/><path d="M433.0 520.3V557.5999999999999" stroke="#cfcfd5" stroke-width="0.8" opacity="0.45"/><path d="M437.7 520.3V557.5999999999999" stroke="#5c5c62" stroke-width="1.2" opacity="0.62"/><path d="M438.9 520.3V557.5999999999999" stroke="#cfcfd5" stroke-width="0.8" opacity="0.45"/><path d="M443.6 520.3V557.5999999999999" stroke="#5c5c62" stroke-width="1.2" opacity="0.62"/><path d="M444.8 520.3V557.5999999999999" stroke="#cfcfd5" stroke-width="0.8" opacity="0.45"/><path d="M449.5 520.3V557.5999999999999" stroke="#5c5c62" stroke-width="1.2" opacity="0.62"/><path d="M450.7 520.3V557.5999999999999" stroke="#cfcfd5" stroke-width="0.8" opacity="0.45"/><path d="M455.4 520.3V557.5999999999999" stroke="#5c5c62" stroke-width="1.2" opacity="0.62"/><path d="M456.6 520.3V557.5999999999999" stroke="#cfcfd5" stroke-width="0.8" opacity="0.45"/><path d="M461.3 520.3V557.5999999999999" stroke="#5c5c62" stroke-width="1.2" opacity="0.62"/><path d="M462.5 520.3V557.5999999999999" stroke="#cfcfd5" stroke-width="0.8" opacity="0.45"/><rect x="390.6" y="520.3" width="76.6" height="37.3" filter="url(#tn)" opacity="0.27"/><rect x="390.6" y="520.3" width="76.6" height="37.3" filter="url(#tl)" opacity="0.16"/><rect x="473.6" y="520.3" width="76.6" height="37.3" fill="#929296"/><path d="M482.2 520.3V557.5999999999999" stroke="#5c5c62" stroke-width="1.2" opacity="0.6"/><path d="M483.5 520.3V557.5999999999999" stroke="#cfcfd5" stroke-width="0.9" opacity="0.55"/><path d="M491.8 520.3V557.5999999999999" stroke="#5c5c62" stroke-width="1.2" opacity="0.6"/><path d="M493.1 520.3V557.5999999999999" stroke="#cfcfd5" stroke-width="0.9" opacity="0.55"/><path d="M501.3 520.3V557.5999999999999" stroke="#5c5c62" stroke-width="1.2" opacity="0.6"/><path d="M502.6 520.3V557.5999999999999" stroke="#cfcfd5" stroke-width="0.9" opacity="0.55"/><path d="M510.9 520.3V557.5999999999999" stroke="#5c5c62" stroke-width="1.2" opacity="0.6"/><path d="M512.2 520.3V557.5999999999999" stroke="#cfcfd5" stroke-width="0.9" opacity="0.55"/><path d="M520.5 520.3V557.5999999999999" stroke="#5c5c62" stroke-width="1.2" opacity="0.6"/><path d="M521.8 520.3V557.5999999999999" stroke="#cfcfd5" stroke-width="0.9" opacity="0.55"/><path d="M530.1 520.3V557.5999999999999" stroke="#5c5c62" stroke-width="1.2" opacity="0.6"/><path d="M531.4 520.3V557.5999999999999" stroke="#cfcfd5" stroke-width="0.9" opacity="0.55"/><path d="M539.6 520.3V557.5999999999999" stroke="#5c5c62" stroke-width="1.2" opacity="0.6"/><path d="M540.9 520.3V557.5999999999999" stroke="#cfcfd5" stroke-width="0.9" opacity="0.55"/><rect x="473.6" y="520.3" width="76.6" height="37.3" filter="url(#tn)" opacity="0.27"/><rect x="473.6" y="520.3" width="76.6" height="37.3" filter="url(#tl)" opacity="0.16"/><rect x="556.6" y="520.3" width="76.6" height="37.3" fill="#97979a"/><path d="M594.9 520.3V557.5999999999999" stroke="#5c5c62" stroke-width="1.1" opacity="0.55"/><path d="M596.0 520.3V557.5999999999999" stroke="#d4d4d8" stroke-width="0.8" opacity="0.5"/><rect x="556.6" y="520.3" width="76.6" height="37.3" filter="url(#tn)" opacity="0.27"/><rect x="556.6" y="520.3" width="76.6" height="37.3" filter="url(#tl)" opacity="0.16"/><rect x="639.6" y="501.1" width="76.6" height="76.1" fill="#908e8d"/><rect x="640.2" y="501.1" width="4.0" height="76.1" fill="#5c5a59" opacity="0.22"/><path d="M645.5 501.1V577.2" stroke="#c4c2c0" stroke-width="1" opacity="0.55"/><rect x="649.8" y="501.1" width="4.0" height="76.1" fill="#5c5a59" opacity="0.22"/><path d="M655.1 501.1V577.2" stroke="#c4c2c0" stroke-width="1" opacity="0.55"/><rect x="659.4" y="501.1" width="4.0" height="76.1" fill="#5c5a59" opacity="0.22"/><path d="M664.7 501.1V577.2" stroke="#c4c2c0" stroke-width="1" opacity="0.55"/><rect x="668.9" y="501.1" width="4.0" height="76.1" fill="#5c5a59" opacity="0.22"/><path d="M674.3 501.1V577.2" stroke="#c4c2c0" stroke-width="1" opacity="0.55"/><rect x="678.5" y="501.1" width="4.0" height="76.1" fill="#5c5a59" opacity="0.22"/><path d="M683.8 501.1V577.2" stroke="#c4c2c0" stroke-width="1" opacity="0.55"/><rect x="688.1" y="501.1" width="4.0" height="76.1" fill="#5c5a59" opacity="0.22"/><path d="M693.4 501.1V577.2" stroke="#c4c2c0" stroke-width="1" opacity="0.55"/><rect x="697.7" y="501.1" width="4.0" height="76.1" fill="#5c5a59" opacity="0.22"/><path d="M703.0 501.1V577.2" stroke="#c4c2c0" stroke-width="1" opacity="0.55"/><rect x="707.2" y="501.1" width="4.0" height="76.1" fill="#5c5a59" opacity="0.22"/><path d="M712.6 501.1V577.2" stroke="#c4c2c0" stroke-width="1" opacity="0.55"/><rect x="639.6" y="501.1" width="76.6" height="76.1" filter="url(#tn)" opacity="0.27"/><rect x="639.6" y="501.1" width="76.6" height="76.1" filter="url(#tl)" opacity="0.16"/><rect x="722.6" y="501.1" width="76.6" height="76.1" fill="#93796a"/><rect x="723.2" y="501.1" width="4.0" height="76.1" fill="#5d4638" opacity="0.22"/><path d="M728.5 501.1V577.2" stroke="#c9ad9b" stroke-width="1" opacity="0.55"/><rect x="732.8" y="501.1" width="4.0" height="76.1" fill="#5d4638" opacity="0.22"/><path d="M738.1 501.1V577.2" stroke="#c9ad9b" stroke-width="1" opacity="0.55"/><rect x="742.4" y="501.1" width="4.0" height="76.1" fill="#5d4638" opacity="0.22"/><path d="M747.7 501.1V577.2" stroke="#c9ad9b" stroke-width="1" opacity="0.55"/><rect x="751.9" y="501.1" width="4.0" height="76.1" fill="#5d4638" opacity="0.22"/><path d="M757.3 501.1V577.2" stroke="#c9ad9b" stroke-width="1" opacity="0.55"/><rect x="761.5" y="501.1" width="4.0" height="76.1" fill="#5d4638" opacity="0.22"/><path d="M766.8 501.1V577.2" stroke="#c9ad9b" stroke-width="1" opacity="0.55"/><rect x="771.1" y="501.1" width="4.0" height="76.1" fill="#5d4638" opacity="0.22"/><path d="M776.4 501.1V577.2" stroke="#c9ad9b" stroke-width="1" opacity="0.55"/><rect x="780.7" y="501.1" width="4.0" height="76.1" fill="#5d4638" opacity="0.22"/><path d="M786.0 501.1V577.2" stroke="#c9ad9b" stroke-width="1" opacity="0.55"/><rect x="790.2" y="501.1" width="4.0" height="76.1" fill="#5d4638" opacity="0.22"/><path d="M795.6 501.1V577.2" stroke="#c9ad9b" stroke-width="1" opacity="0.55"/><rect x="722.6" y="501.1" width="76.6" height="76.1" filter="url(#tn)" opacity="0.27"/><rect x="722.6" y="501.1" width="76.6" height="76.1" filter="url(#tl)" opacity="0.16"/><rect x="141.6" y="604.0" width="76.6" height="47.0" fill="#9b8a87"/><path d="M147.5 604.0V651.0" stroke="#6a5a58" stroke-width="1.2" opacity="0.62"/><path d="M148.7 604.0V651.0" stroke="#c3b3af" stroke-width="0.8" opacity="0.45"/><path d="M153.4 604.0V651.0" stroke="#6a5a58" stroke-width="1.2" opacity="0.62"/><path d="M154.6 604.0V651.0" stroke="#c3b3af" stroke-width="0.8" opacity="0.45"/><path d="M159.3 604.0V651.0" stroke="#6a5a58" stroke-width="1.2" opacity="0.62"/><path d="M160.5 604.0V651.0" stroke="#c3b3af" stroke-width="0.8" opacity="0.45"/><path d="M165.2 604.0V651.0" stroke="#6a5a58" stroke-width="1.2" opacity="0.62"/><path d="M166.4 604.0V651.0" stroke="#c3b3af" stroke-width="0.8" opacity="0.45"/><path d="M171.1 604.0V651.0" stroke="#6a5a58" stroke-width="1.2" opacity="0.62"/><path d="M172.3 604.0V651.0" stroke="#c3b3af" stroke-width="0.8" opacity="0.45"/><path d="M177.0 604.0V651.0" stroke="#6a5a58" stroke-width="1.2" opacity="0.62"/><path d="M178.2 604.0V651.0" stroke="#c3b3af" stroke-width="0.8" opacity="0.45"/><path d="M182.8 604.0V651.0" stroke="#6a5a58" stroke-width="1.2" opacity="0.62"/><path d="M184.0 604.0V651.0" stroke="#c3b3af" stroke-width="0.8" opacity="0.45"/><path d="M188.7 604.0V651.0" stroke="#6a5a58" stroke-width="1.2" opacity="0.62"/><path d="M189.9 604.0V651.0" stroke="#c3b3af" stroke-width="0.8" opacity="0.45"/><path d="M194.6 604.0V651.0" stroke="#6a5a58" stroke-width="1.2" opacity="0.62"/><path d="M195.8 604.0V651.0" stroke="#c3b3af" stroke-width="0.8" opacity="0.45"/><path d="M200.5 604.0V651.0" stroke="#6a5a58" stroke-width="1.2" opacity="0.62"/><path d="M201.7 604.0V651.0" stroke="#c3b3af" stroke-width="0.8" opacity="0.45"/><path d="M206.4 604.0V651.0" stroke="#6a5a58" stroke-width="1.2" opacity="0.62"/><path d="M207.6 604.0V651.0" stroke="#c3b3af" stroke-width="0.8" opacity="0.45"/><path d="M212.3 604.0V651.0" stroke="#6a5a58" stroke-width="1.2" opacity="0.62"/><path d="M213.5 604.0V651.0" stroke="#c3b3af" stroke-width="0.8" opacity="0.45"/><rect x="141.6" y="604.0" width="76.6" height="47.0" filter="url(#tn)" opacity="0.27"/><rect x="141.6" y="604.0" width="76.6" height="47.0" filter="url(#tl)" opacity="0.16"/><rect x="224.6" y="604.0" width="76.6" height="47.0" fill="#9a8986"/><path d="M233.2 604.0V651.0" stroke="#6a5a58" stroke-width="1.2" opacity="0.6"/><path d="M234.5 604.0V651.0" stroke="#c3b3af" stroke-width="0.9" opacity="0.55"/><path d="M242.8 604.0V651.0" stroke="#6a5a58" stroke-width="1.2" opacity="0.6"/><path d="M244.1 604.0V651.0" stroke="#c3b3af" stroke-width="0.9" opacity="0.55"/><path d="M252.3 604.0V651.0" stroke="#6a5a58" stroke-width="1.2" opacity="0.6"/><path d="M253.6 604.0V651.0" stroke="#c3b3af" stroke-width="0.9" opacity="0.55"/><path d="M261.9 604.0V651.0" stroke="#6a5a58" stroke-width="1.2" opacity="0.6"/><path d="M263.2 604.0V651.0" stroke="#c3b3af" stroke-width="0.9" opacity="0.55"/><path d="M271.5 604.0V651.0" stroke="#6a5a58" stroke-width="1.2" opacity="0.6"/><path d="M272.8 604.0V651.0" stroke="#c3b3af" stroke-width="0.9" opacity="0.55"/><path d="M281.1 604.0V651.0" stroke="#6a5a58" stroke-width="1.2" opacity="0.6"/><path d="M282.4 604.0V651.0" stroke="#c3b3af" stroke-width="0.9" opacity="0.55"/><path d="M290.6 604.0V651.0" stroke="#6a5a58" stroke-width="1.2" opacity="0.6"/><path d="M291.9 604.0V651.0" stroke="#c3b3af" stroke-width="0.9" opacity="0.55"/><rect x="224.6" y="604.0" width="76.6" height="47.0" filter="url(#tn)" opacity="0.27"/><rect x="224.6" y="604.0" width="76.6" height="47.0" filter="url(#tl)" opacity="0.16"/><rect x="307.6" y="604.0" width="76.6" height="47.0" fill="#9c8b88"/><path d="M345.9 604.0V651.0" stroke="#6a5a58" stroke-width="1.1" opacity="0.55"/><path d="M347.0 604.0V651.0" stroke="#c9b9b5" stroke-width="0.8" opacity="0.5"/><rect x="307.6" y="604.0" width="76.6" height="47.0" filter="url(#tn)" opacity="0.27"/><rect x="307.6" y="604.0" width="76.6" height="47.0" filter="url(#tl)" opacity="0.16"/><rect x="390.6" y="604.0" width="76.6" height="47.0" fill="#aa9281"/><path d="M396.5 604.0V651.0" stroke="#7a6352" stroke-width="1.2" opacity="0.62"/><path d="M397.7 604.0V651.0" stroke="#d3bcab" stroke-width="0.8" opacity="0.45"/><path d="M402.4 604.0V651.0" stroke="#7a6352" stroke-width="1.2" opacity="0.62"/><path d="M403.6 604.0V651.0" stroke="#d3bcab" stroke-width="0.8" opacity="0.45"/><path d="M408.3 604.0V651.0" stroke="#7a6352" stroke-width="1.2" opacity="0.62"/><path d="M409.5 604.0V651.0" stroke="#d3bcab" stroke-width="0.8" opacity="0.45"/><path d="M414.2 604.0V651.0" stroke="#7a6352" stroke-width="1.2" opacity="0.62"/><path d="M415.4 604.0V651.0" stroke="#d3bcab" stroke-width="0.8" opacity="0.45"/><path d="M420.1 604.0V651.0" stroke="#7a6352" stroke-width="1.2" opacity="0.62"/><path d="M421.3 604.0V651.0" stroke="#d3bcab" stroke-width="0.8" opacity="0.45"/><path d="M426.0 604.0V651.0" stroke="#7a6352" stroke-width="1.2" opacity="0.62"/><path d="M427.2 604.0V651.0" stroke="#d3bcab" stroke-width="0.8" opacity="0.45"/><path d="M431.8 604.0V651.0" stroke="#7a6352" stroke-width="1.2" opacity="0.62"/><path d="M433.0 604.0V651.0" stroke="#d3bcab" stroke-width="0.8" opacity="0.45"/><path d="M437.7 604.0V651.0" stroke="#7a6352" stroke-width="1.2" opacity="0.62"/><path d="M438.9 604.0V651.0" stroke="#d3bcab" stroke-width="0.8" opacity="0.45"/><path d="M443.6 604.0V651.0" stroke="#7a6352" stroke-width="1.2" opacity="0.62"/><path d="M444.8 604.0V651.0" stroke="#d3bcab" stroke-width="0.8" opacity="0.45"/><path d="M449.5 604.0V651.0" stroke="#7a6352" stroke-width="1.2" opacity="0.62"/><path d="M450.7 604.0V651.0" stroke="#d3bcab" stroke-width="0.8" opacity="0.45"/><path d="M455.4 604.0V651.0" stroke="#7a6352" stroke-width="1.2" opacity="0.62"/><path d="M456.6 604.0V651.0" stroke="#d3bcab" stroke-width="0.8" opacity="0.45"/><path d="M461.3 604.0V651.0" stroke="#7a6352" stroke-width="1.2" opacity="0.62"/><path d="M462.5 604.0V651.0" stroke="#d3bcab" stroke-width="0.8" opacity="0.45"/><rect x="390.6" y="604.0" width="76.6" height="47.0" filter="url(#tn)" opacity="0.27"/><rect x="390.6" y="604.0" width="76.6" height="47.0" filter="url(#tl)" opacity="0.16"/><rect x="473.6" y="604.0" width="76.6" height="47.0" fill="#a9907f"/><path d="M482.2 604.0V651.0" stroke="#7a6352" stroke-width="1.2" opacity="0.6"/><path d="M483.5 604.0V651.0" stroke="#dcc8ba" stroke-width="0.9" opacity="0.55"/><path d="M491.8 604.0V651.0" stroke="#7a6352" stroke-width="1.2" opacity="0.6"/><path d="M493.1 604.0V651.0" stroke="#dcc8ba" stroke-width="0.9" opacity="0.55"/><path d="M501.3 604.0V651.0" stroke="#7a6352" stroke-width="1.2" opacity="0.6"/><path d="M502.6 604.0V651.0" stroke="#dcc8ba" stroke-width="0.9" opacity="0.55"/><path d="M510.9 604.0V651.0" stroke="#7a6352" stroke-width="1.2" opacity="0.6"/><path d="M512.2 604.0V651.0" stroke="#dcc8ba" stroke-width="0.9" opacity="0.55"/><path d="M520.5 604.0V651.0" stroke="#7a6352" stroke-width="1.2" opacity="0.6"/><path d="M521.8 604.0V651.0" stroke="#dcc8ba" stroke-width="0.9" opacity="0.55"/><path d="M530.1 604.0V651.0" stroke="#7a6352" stroke-width="1.2" opacity="0.6"/><path d="M531.4 604.0V651.0" stroke="#dcc8ba" stroke-width="0.9" opacity="0.55"/><path d="M539.6 604.0V651.0" stroke="#7a6352" stroke-width="1.2" opacity="0.6"/><path d="M540.9 604.0V651.0" stroke="#dcc8ba" stroke-width="0.9" opacity="0.55"/><rect x="473.6" y="604.0" width="76.6" height="47.0" filter="url(#tn)" opacity="0.27"/><rect x="473.6" y="604.0" width="76.6" height="47.0" filter="url(#tl)" opacity="0.16"/><rect x="556.6" y="604.0" width="76.6" height="47.0" fill="#aa8f7d"/><path d="M594.9 604.0V651.0" stroke="#7a6352" stroke-width="1.1" opacity="0.55"/><path d="M596.0 604.0V651.0" stroke="#e0ccbf" stroke-width="0.8" opacity="0.5"/><rect x="556.6" y="604.0" width="76.6" height="47.0" filter="url(#tn)" opacity="0.27"/><rect x="556.6" y="604.0" width="76.6" height="47.0" filter="url(#tl)" opacity="0.16"/><rect x="639.6" y="604.0" width="76.6" height="47.0" fill="#8f8b8a"/><path d="M645.5 604.0V651.0" stroke="#605c5b" stroke-width="1.2" opacity="0.62"/><path d="M646.7 604.0V651.0" stroke="#c9c5c4" stroke-width="0.8" opacity="0.45"/><path d="M651.4 604.0V651.0" stroke="#605c5b" stroke-width="1.2" opacity="0.62"/><path d="M652.6 604.0V651.0" stroke="#c9c5c4" stroke-width="0.8" opacity="0.45"/><path d="M657.3 604.0V651.0" stroke="#605c5b" stroke-width="1.2" opacity="0.62"/><path d="M658.5 604.0V651.0" stroke="#c9c5c4" stroke-width="0.8" opacity="0.45"/><path d="M663.2 604.0V651.0" stroke="#605c5b" stroke-width="1.2" opacity="0.62"/><path d="M664.4 604.0V651.0" stroke="#c9c5c4" stroke-width="0.8" opacity="0.45"/><path d="M669.1 604.0V651.0" stroke="#605c5b" stroke-width="1.2" opacity="0.62"/><path d="M670.3 604.0V651.0" stroke="#c9c5c4" stroke-width="0.8" opacity="0.45"/><path d="M675.0 604.0V651.0" stroke="#605c5b" stroke-width="1.2" opacity="0.62"/><path d="M676.2 604.0V651.0" stroke="#c9c5c4" stroke-width="0.8" opacity="0.45"/><path d="M680.8 604.0V651.0" stroke="#605c5b" stroke-width="1.2" opacity="0.62"/><path d="M682.0 604.0V651.0" stroke="#c9c5c4" stroke-width="0.8" opacity="0.45"/><path d="M686.7 604.0V651.0" stroke="#605c5b" stroke-width="1.2" opacity="0.62"/><path d="M687.9 604.0V651.0" stroke="#c9c5c4" stroke-width="0.8" opacity="0.45"/><path d="M692.6 604.0V651.0" stroke="#605c5b" stroke-width="1.2" opacity="0.62"/><path d="M693.8 604.0V651.0" stroke="#c9c5c4" stroke-width="0.8" opacity="0.45"/><path d="M698.5 604.0V651.0" stroke="#605c5b" stroke-width="1.2" opacity="0.62"/><path d="M699.7 604.0V651.0" stroke="#c9c5c4" stroke-width="0.8" opacity="0.45"/><path d="M704.4 604.0V651.0" stroke="#605c5b" stroke-width="1.2" opacity="0.62"/><path d="M705.6 604.0V651.0" stroke="#c9c5c4" stroke-width="0.8" opacity="0.45"/><path d="M710.3 604.0V651.0" stroke="#605c5b" stroke-width="1.2" opacity="0.62"/><path d="M711.5 604.0V651.0" stroke="#c9c5c4" stroke-width="0.8" opacity="0.45"/><rect x="639.6" y="604.0" width="76.6" height="47.0" filter="url(#tn)" opacity="0.27"/><rect x="639.6" y="604.0" width="76.6" height="47.0" filter="url(#tl)" opacity="0.16"/><rect x="722.6" y="604.0" width="76.6" height="47.0" fill="#928e8d"/><path d="M731.2 604.0V651.0" stroke="#605c5b" stroke-width="1.2" opacity="0.6"/><path d="M732.5 604.0V651.0" stroke="#c9c5c4" stroke-width="0.9" opacity="0.55"/><path d="M740.8 604.0V651.0" stroke="#605c5b" stroke-width="1.2" opacity="0.6"/><path d="M742.0 604.0V651.0" stroke="#c9c5c4" stroke-width="0.9" opacity="0.55"/><path d="M750.3 604.0V651.0" stroke="#605c5b" stroke-width="1.2" opacity="0.6"/><path d="M751.6 604.0V651.0" stroke="#c9c5c4" stroke-width="0.9" opacity="0.55"/><path d="M759.9 604.0V651.0" stroke="#605c5b" stroke-width="1.2" opacity="0.6"/><path d="M761.2 604.0V651.0" stroke="#c9c5c4" stroke-width="0.9" opacity="0.55"/><path d="M769.5 604.0V651.0" stroke="#605c5b" stroke-width="1.2" opacity="0.6"/><path d="M770.8 604.0V651.0" stroke="#c9c5c4" stroke-width="0.9" opacity="0.55"/><path d="M779.1 604.0V651.0" stroke="#605c5b" stroke-width="1.2" opacity="0.6"/><path d="M780.4 604.0V651.0" stroke="#c9c5c4" stroke-width="0.9" opacity="0.55"/><path d="M788.6 604.0V651.0" stroke="#605c5b" stroke-width="1.2" opacity="0.6"/><path d="M789.9 604.0V651.0" stroke="#c9c5c4" stroke-width="0.9" opacity="0.55"/><rect x="722.6" y="604.0" width="76.6" height="47.0" filter="url(#tn)" opacity="0.27"/><rect x="722.6" y="604.0" width="76.6" height="47.0" filter="url(#tl)" opacity="0.16"/></svg>
<span class="t" style="left:141.6px;top:578.4px;transform:scaleX(0.731)">リブブロックB笠木001</span>
<span class="t" style="left:224.6px;top:578.4px;transform:scaleX(0.731)">リブブロックB笠木002</span>
<span class="t" style="left:307.6px;top:578.4px;transform:scaleX(0.731)">リブブロックB笠木003</span>
<span class="t" style="left:390.6px;top:578.4px;transform:scaleX(0.733)">リブブロックG笠木00</span>
<span class="t" style="left:391.1px;top:589.6px;transform:scaleX(0.755)">1</span>
<span class="t" style="left:473.6px;top:578.4px;transform:scaleX(0.733)">リブブロックG笠木00</span>
<span class="t" style="left:474.1px;top:589.6px;transform:scaleX(0.755)">2</span>
<span class="t" style="left:556.6px;top:578.4px;transform:scaleX(0.733)">リブブロックG笠木00</span>
<span class="t" style="left:557.1px;top:589.6px;transform:scaleX(0.755)">3</span>
<span class="t" style="left:639.9px;top:578.5px;transform:scaleX(0.853)">化粧50_15G1笠木</span>
<span class="t" style="left:723.2px;top:578.5px;transform:scaleX(0.839)">化粧50_15YR1笠木</span>
<!-- texture properties -->
<div style="left:884px;top:497px;width:140px;height:154px;background:#fff;border-left:1px solid #7e7e7e;border-top:1px solid #7e7e7e"></div>
<span class="t" style="left:895.2px;top:507.4px;transform:scaleX(0.856);font-size:9px">DefaultClass</span>
<div class="inp" style="left:913px;top:519.5px;width:25.5px;height:15px"></div><span class="t" style="left:916.0px;top:521.0px;transform:scaleX(0.945);font-size:9px">800</span>
<span class="t" style="left:943.3px;top:525.3px;transform:scaleX(0.876)">mm</span>
<div class="cbx" style="left:962.5px;top:522px"></div><svg style="left:962.5px;top:522px" width="9" height="9" viewBox="0 0 9 9"><path d="M2 4.6L3.8 6.3L7 2.8" fill="none" stroke="#fff" stroke-width="1.1"/></svg>
<div style="left:895px;top:538.5px;width:61.5px;height:62px;background:#fbfbfb;border:1px solid #a9a9a9;border-right-color:#dcdcdc;border-bottom-color:#dcdcdc"></div>
<svg style="left:897.5px;top:541.5px" width="57.5" height="56.5" viewBox="0 0 57.5 56.5"><rect width="57.5" height="56.5" fill="#8e776a"/><rect x="1" y="0" width="5" height="56.5" fill="#5d463a" opacity="0.22"/><path d="M8.2 0V56.5" stroke="#c9ae9d" stroke-width="1" opacity="0.6"/><path d="M0.6 0V56.5" stroke="#4a372e" stroke-width="0.9" opacity="0.55"/><rect x="13.5" y="0" width="5" height="56.5" fill="#5d463a" opacity="0.22"/><path d="M20.7 0V56.5" stroke="#c9ae9d" stroke-width="1" opacity="0.6"/><path d="M13.1 0V56.5" stroke="#4a372e" stroke-width="0.9" opacity="0.55"/><rect x="26" y="0" width="5" height="56.5" fill="#5d463a" opacity="0.22"/><path d="M33.2 0V56.5" stroke="#c9ae9d" stroke-width="1" opacity="0.6"/><path d="M25.6 0V56.5" stroke="#4a372e" stroke-width="0.9" opacity="0.55"/><rect x="39" y="0" width="5" height="56.5" fill="#5d463a" opacity="0.22"/><path d="M46.2 0V56.5" stroke="#c9ae9d" stroke-width="1" opacity="0.6"/><path d="M38.6 0V56.5" stroke="#4a372e" stroke-width="0.9" opacity="0.55"/><rect x="51.5" y="0" width="5" height="56.5" fill="#5d463a" opacity="0.22"/><path d="M58.7 0V56.5" stroke="#c9ae9d" stroke-width="1" opacity="0.6"/><path d="M51.1 0V56.5" stroke="#4a372e" stroke-width="0.9" opacity="0.55"/><rect width="57.5" height="56.5" filter="url(#tn)" opacity="0.27"/><rect width="57.5" height="56.5" filter="url(#tl)" opacity="0.16"/></svg>
<div class="inp" style="left:962px;top:539px;width:25.5px;height:15.5px"></div><span class="t" style="left:965.0px;top:540.6px;transform:scaleX(0.945);font-size:9px">800</span>
<span class="t" style="left:990.4px;top:543.3px;transform:scaleX(0.912)">mm</span>
<div class="cb" style="left:962.3px;top:563.2px;border-color:#8a8a8a"></div><span class="t" style="left:973.7px;top:561.8px;transform:scaleX(0.878)">左右反転</span>
<div class="cb" style="left:962.3px;top:576.7px;border-color:#8a8a8a"></div><span class="t" style="left:973.7px;top:575.3px;transform:scaleX(0.878)">上下反転</span>
<div class="cb" style="left:962.3px;top:590.7px;border-color:#8a8a8a"></div><span class="t" style="left:973.7px;top:589.3px;transform:scaleX(0.688)">スムーズ</span>
<svg style="left:894px;top:604px" width="70" height="18" viewBox="0 0 70 18"><g fill="none" stroke="#555" stroke-width="1.1"><path d="M13.6 14.2C6.5 14.8 4.2 10.5 4.3 2.6"/><path d="M1.6 5.6L4.3 2.2L7 5.6"/><path d="M52.8 14.2C60 14.8 62.3 10.5 62.2 2.6"/><path d="M59.5 5.6L62.2 2.2L64.9 5.6"/></g><circle cx="47.4" cy="3.4" r="0.9" fill="none" stroke="#444" stroke-width="0.7"/></svg>
<div class="inp" style="left:914.3px;top:606.6px;width:25.5px;height:15.5px"></div><span class="t" style="left:917.2px;top:608.4px;transform:scaleX(0.917);font-size:9px">0</span>
<span class="t" style="left:888.6px;top:629.3px;transform:scaleX(0.857)">透明度</span>
<div style="left:918px;top:629px;width:81px;height:11px;background:#e1e5e5"></div>
<div style="left:918px;top:628.7px;width:6px;height:11.3px;background:#0a6fd0;border-radius:1px"></div>
<!-- bottom sliver -->
<div style="left:0px;top:651px;width:1024px;height:5px;background:#d3d4d4;border-top:1px solid #a9a9a9"></div>
<div style="left:4px;top:652px;width:13px;height:4px;background:#c9c2ab"></div>
<div style="left:22px;top:652px;width:10px;height:4px;background:#cfc8b4"></div>
<div style="left:40px;top:652px;width:11px;height:4px;background:#c9c2ab"></div>
<div style="left:66px;top:652px;width:12px;height:4px;background:#cdc5ae"></div>
<div style="left:120px;top:652px;width:10px;height:4px;background:#cfc9b6"></div>
<div style="left:180px;top:652px;width:19px;height:4px;background:#7d6653"></div>
<div style="left:224px;top:652px;width:26px;height:4px;background:#86705c"></div>
<div style="left:283px;top:652px;width:6px;height:4px;background:#8db87a"></div>
<div style="left:324px;top:652px;width:5px;height:4px;background:#8db87a"></div>
<div style="left:381px;top:652px;width:29px;height:4px;background:#aaa27c"></div>
<div style="left:446px;top:652px;width:9px;height:4px;background:#8fc07e"></div>
<div style="left:503px;top:652px;width:2px;height:4px;background:#bdbdbd"></div>
<div style="left:579px;top:652px;width:2px;height:4px;background:#bdbdbd"></div>
<div style="left:860px;top:652px;width:2px;height:4px;background:#5a5a5a"></div>
<div style="left:869px;top:652px;width:2px;height:4px;background:#9a9a9a"></div>
<div style="left:921px;top:652px;width:1px;height:4px;background:#8a8a8a"></div>
<div style="left:930px;top:652px;width:1px;height:4px;background:#a0a0a0"></div>
<div style="left:985px;top:652px;width:1px;height:4px;background:#8a8a8a"></div>
<div style="left:1000px;top:652px;width:1px;height:4px;background:#9a9a9a"></div>
</body></html>
